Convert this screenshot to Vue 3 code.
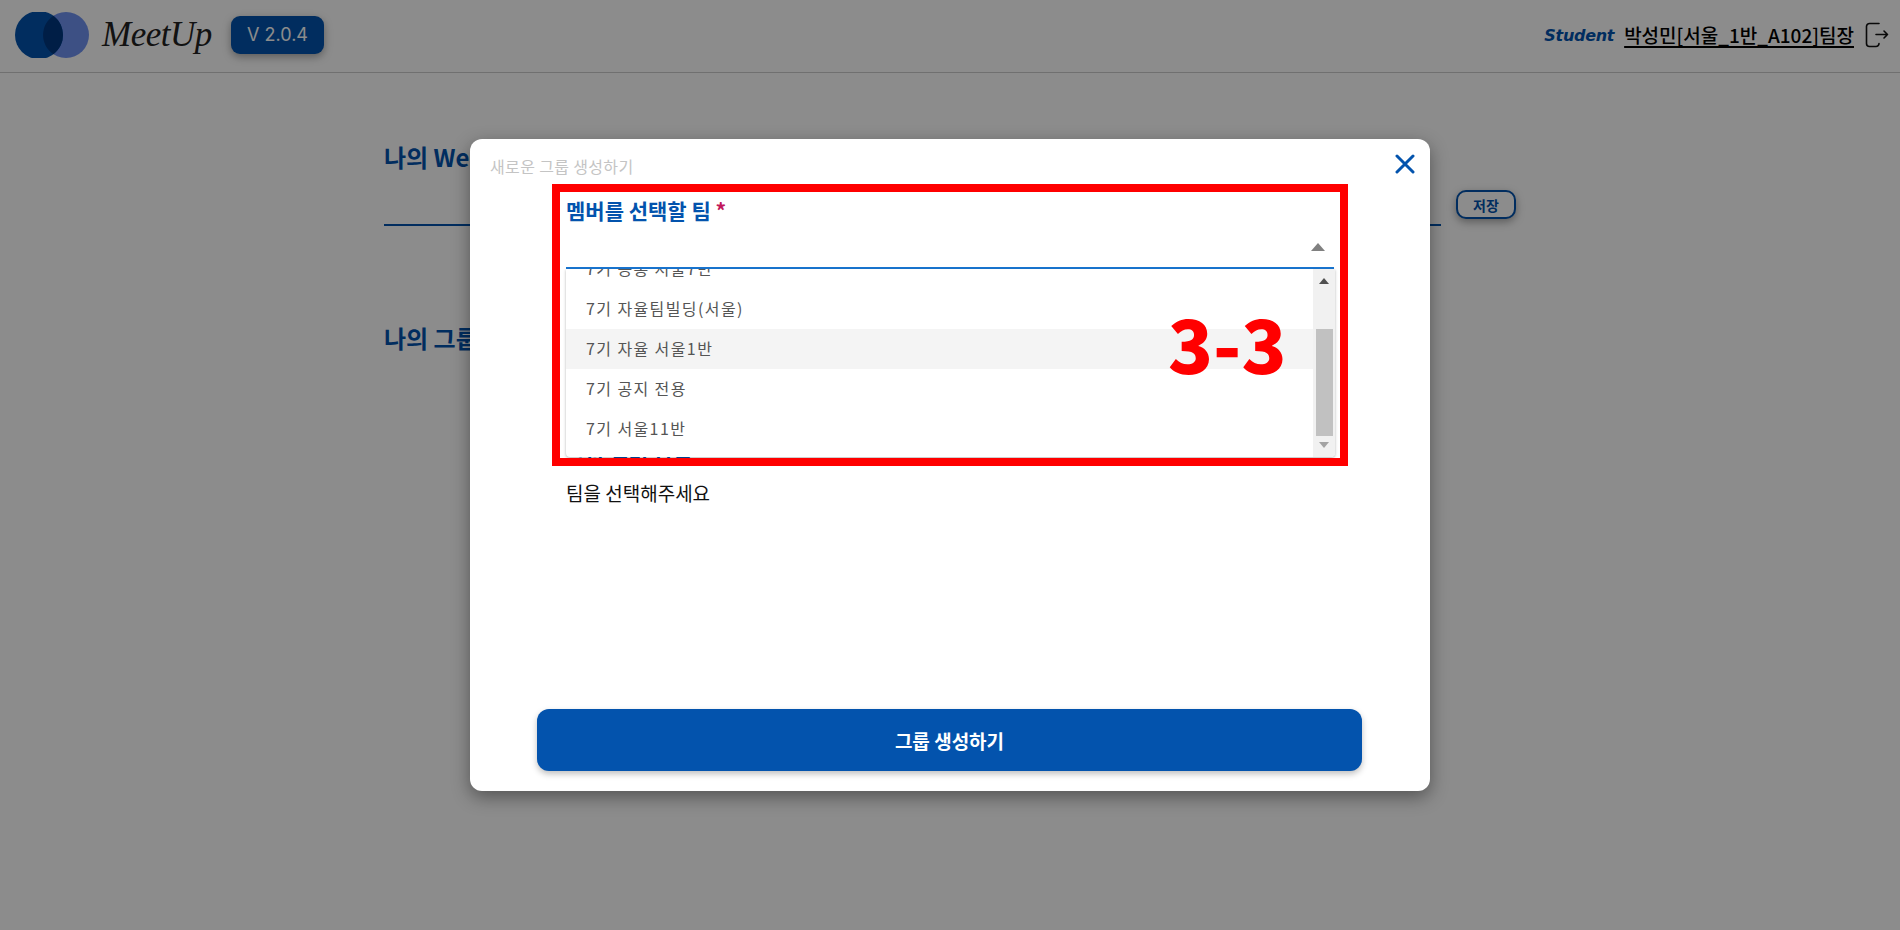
<template>
  <div class="page">
    <header class="topbar">
      <div class="brand">
        <svg class="logo" width="74" height="46" viewBox="0 0 74 46">
          <circle cx="51" cy="23" r="23" fill="#7093f0" />
          <circle cx="24" cy="23" r="24" fill="#0353ad" />
          <path d="M38.4 3.8A24 24 0 0 1 38.4 42.2A23 23 0 0 1 38.4 3.8Z" fill="#003780" />
        </svg>
        <span class="wordmark">MeetUp</span>
        <span class="version">V 2.0.4</span>
      </div>
      <div class="user">
        <span class="role">Student</span>
        <a class="name">박성민[서울_1반_A102]팀장</a>
        <svg class="logout" width="24" height="26" viewBox="0 0 24 26" fill="none" stroke="#111" stroke-width="1.6" stroke-linecap="round" stroke-linejoin="round">
          <path d="M14 1.5H4.5a3 3 0 0 0-3 3v17a3 3 0 0 0 3 3H11a3 3 0 0 0 3-3" />
          <path d="M11 12.5h11.5M19 9l3.5 3.5L19 16" />
        </svg>
      </div>
    </header>

    <main class="content">
      <h2 class="section-title">나의 Webex 링크</h2>
      <div class="link-row">
        <div class="link-input"></div>
        <button class="save">저장</button>
      </div>
      <h2 class="section-title groups">나의 그룹</h2>
    </main>

    <div class="backdrop">
      <section class="modal">
        <p class="modal-title">새로운 그룹 생성하기</p>
        <svg class="close" width="20" height="20" viewBox="0 0 20 20" stroke="#0353ad" stroke-width="3" stroke-linecap="round">
          <path d="M2 2l16 16M18 2L2 18" />
        </svg>

        <div class="form">
          <label class="field-label">멤버를 선택할 팀 <em>*</em></label>
          <div class="select">
            <svg class="caret" width="14" height="8" viewBox="0 0 14 8"><path d="M7 0l7 8H0z" fill="#808080" /></svg>
            <div class="menu">
              <ul class="options">
                <li v-for="team in teams" :key="team" :class="{ active: team === activeTeam }">{{ team }}</li>
              </ul>
              <div class="scrollbar">
                <svg width="10" height="6" viewBox="0 0 10 6"><path d="M5 0l5 6H0z" fill="#505050" /></svg>
                <div class="thumb"></div>
                <svg width="10" height="6" viewBox="0 0 10 6"><path d="M5 6l5-6H0z" fill="#a3a3a3" /></svg>
              </div>
            </div>
          </div>
          <label class="field-label second">그룹 멤버 선택</label>
          <p class="hint">팀을 선택해주세요</p>
        </div>

        <button class="submit">그룹 생성하기</button>
      </section>

      <div class="marker">
        <span class="marker-label">3-3</span>
      </div>
    </div>
  </div>
</template>

<script setup>
const teams = ['7기 공통 서울7반', '7기 자율팀빌딩(서울)', '7기 자율 서울1반', '7기 공지 전용', '7기 서울11반']
const activeTeam = '7기 자율 서울1반'
</script>

<style>
html, body {
  margin: 0;
  background: #fff;
}
</style>

<style scoped>
.page {
  position: relative;
  height: 930px;
  overflow: hidden;
  font-family: "Noto Sans CJK KR", "Noto Sans", sans-serif;
  color: #000;
}
.topbar {
  border-bottom: 1px solid #ccc;
  display: flex;
  align-items: center;
  justify-content: space-between;
  padding: 0 11px 2px 15px;
  height: 70px;
}
.brand {
  display: flex;
  align-items: center;
}
.logo {
  margin-right: 13px;
}
.wordmark {
  font-family: "Liberation Serif", serif;
  font-style: italic;
  font-size: 35px;
  line-height: 46px;
  color: #222;
  width: 129px;
  letter-spacing: -0.5px;
}
.version {
  width: 93px;
  height: 38px;
  line-height: 38px;
  text-align: center;
  border-radius: 9px;
  background: #0353ad;
  color: #fff;
  font-family: Inter, sans-serif;
  font-size: 18px;
  box-shadow: 0 3px 8px rgba(0, 0, 0, 0.35);
}
.user {
  display: flex;
  align-items: center;
}
.role {
  font-family: "DejaVu Sans", sans-serif;
  font-style: italic;
  font-weight: 700;
  font-size: 16px;
  color: #0353ad;
  margin-right: 10px;
  white-space: nowrap;
  letter-spacing: -0.3px;
}
.name {
  font-size: 19px;
  line-height: 26px;
  font-weight: 500;
  text-decoration: underline;
  text-decoration-thickness: 2px;
  text-underline-offset: 3px;
  white-space: nowrap;
}
.logout {
  margin-left: 11px;
}
.content {
  width: 1132px;
  margin: 0 auto;
}
.section-title {
  margin: 0;
  font-size: 24px;
  line-height: 32px;
  font-weight: 700;
  color: #0353ad;
  white-space: nowrap;
}
.content > .section-title:first-child {
  padding-top: 68px;
}
.link-row {
  display: flex;
  align-items: flex-start;
  gap: 15px;
  height: 64px;
  margin-top: -2px;
  padding-top: 19px;
  box-sizing: border-box;
}
.link-input {
  flex: 1;
  height: 34px;
  border-bottom: 2px solid #0353ad;
}
.save {
  width: 60px;
  height: 29px;
  padding: 0;
  border: 2px solid #0353ad;
  border-radius: 10px;
  background: #fff;
  color: #0353ad;
  font: 700 14px "Noto Sans CJK KR", sans-serif;
  box-shadow: 0 3px 8px rgba(0, 0, 0, 0.35);
}
.section-title.groups {
  margin-top: 87px;
}
.backdrop {
  position: absolute;
  inset: 0;
  display: flex;
  align-items: center;
  justify-content: center;
  background: rgba(0, 0, 0, 0.45);
}
.modal {
  position: relative;
  width: 960px;
  height: 652px;
  box-sizing: border-box;
  padding: 16px 68px 20px 20px;
  border-radius: 12px;
  background: #fff;
  box-shadow: 0 6px 18px rgba(0, 0, 0, 0.4);
  display: flex;
  flex-direction: column;
}
.modal-title {
  margin: 0;
  font-size: 16px;
  letter-spacing: 0.35px;
  line-height: 22px;
  color: #c4c4c4;
}
.close {
  position: absolute;
  top: 15px;
  right: 15px;
}
.form {
  flex: 1;
  padding: 18px 0 0 76px;
  width: 768px;
}
.field-label {
  display: block;
  font-size: 21px;
  line-height: 30px;
  font-weight: 700;
  color: #0353ad;
}
.field-label em {
  font-style: normal;
  color: #c2185b;
}
.field-label.second {
  margin-top: 168px;
}
.select {
  position: relative;
  height: 35px;
  border-bottom: 2px solid #1976d2;
  margin-top: 7px;
}
.caret {
  position: absolute;
  right: 9px;
  top: 11px;
}
.menu {
  position: absolute;
  top: 37px;
  left: 0;
  width: 769px;
  height: 188px;
  display: flex;
  overflow: hidden;
  background: #fff;
  border-radius: 0 0 4px 4px;
  box-shadow: 0 1px 3px rgba(0, 0, 0, 0.3);
  z-index: 2;
}
.options {
  flex: 1;
  list-style: none;
  margin: -20px 0 0;
  padding: 0;
}
.options li {
  height: 40px;
  line-height: 39px;
  padding-left: 20px;
  font-size: 16px;
  color: #555;
  letter-spacing: 1.4px;
}
.options li.active {
  background: #f4f4f4;
}
.scrollbar {
  width: 22px;
  background: #f1f1f1;
  display: flex;
  flex-direction: column;
  align-items: center;
  padding-top: 9px;
  box-sizing: border-box;
}
.thumb {
  width: 17px;
  height: 107px;
  margin: 45px 0 6px;
  background: #c1c1c1;
}
.hint {
  margin: 13px 0 0;
  font-size: 19px;
  line-height: 26px;
  color: #111;
}
.submit {
  align-self: flex-start;
  margin-left: 47px;
  width: 825px;
  height: 62px;
  border: 0;
  border-radius: 12px;
  background: #0353ad;
  color: #fff;
  font: 700 19px "Noto Sans CJK KR", sans-serif;
  box-shadow: 0 3px 6px rgba(0, 0, 0, 0.25);
}
.marker {
  position: absolute;
  left: 552px;
  top: 184px;
  width: 796px;
  height: 282px;
  box-sizing: border-box;
  border: 8px solid #f00;
  z-index: 3;
}
.marker-label {
  position: absolute;
  left: 608px;
  top: 112px;
  font-family: "Noto Sans CJK KR", sans-serif;
  font-weight: 900;
  font-size: 74px;
  line-height: 76px;
  color: #f00;
  white-space: nowrap;
}
</style>
